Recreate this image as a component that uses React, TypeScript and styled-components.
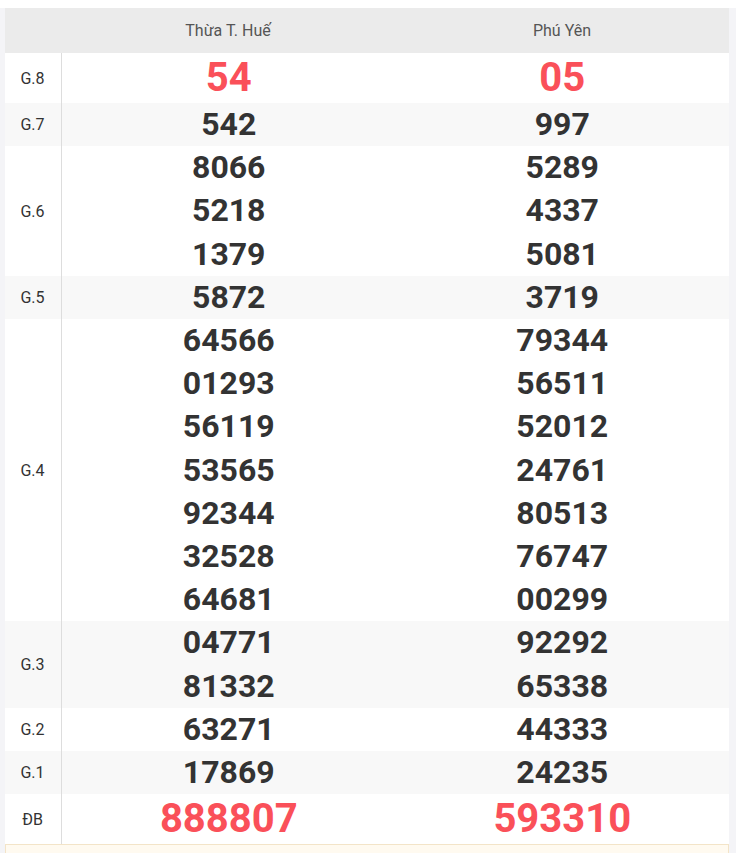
import React from "react";
import styled, { createGlobalStyle } from "styled-components";

const GlobalStyle = createGlobalStyle`
  body {
    margin: 0;
    background: #ffffff;
    font-family: Roboto, "Liberation Sans", sans-serif;
  }
`;

type Prize = {
  label: string;
  hue: [string[], string[]];
  big?: boolean;
};

const provinces = ["Thừa T. Huế", "Phú Yên"];

const prizes: Prize[] = [
  { label: "G.8", hue: [["54"], ["05"]], big: true },
  { label: "G.7", hue: [["542"], ["997"]] },
  { label: "G.6", hue: [["8066", "5218", "1379"], ["5289", "4337", "5081"]] },
  { label: "G.5", hue: [["5872"], ["3719"]] },
  {
    label: "G.4",
    hue: [
      ["64566", "01293", "56119", "53565", "92344", "32528", "64681"],
      ["79344", "56511", "52012", "24761", "80513", "76747", "00299"],
    ],
  },
  { label: "G.3", hue: [["04771", "81332"], ["92292", "65338"]] },
  { label: "G.2", hue: [["63271"], ["44333"]] },
  { label: "G.1", hue: [["17869"], ["24235"]] },
  { label: "ĐB", hue: [["888807"], ["593310"]], big: true },
];

const App = () => {
  return (
    <Page>
      <GlobalStyle />
      <Frame>
        <Table>
          <HeadRow>
            <HeadCell />
            {provinces.map((p) => (
              <HeadCell key={p}>{p}</HeadCell>
            ))}
          </HeadRow>
          {prizes.map((prize, i) => (
            <Row key={prize.label} $alt={i % 2 === 1}>
              <Label>{prize.label}</Label>
              {prize.hue.map((nums, c) => (
                <Numbers key={c}>
                  {nums.map((n) => (
                    <Num key={n} $big={prize.big}>
                      {n}
                    </Num>
                  ))}
                </Numbers>
              ))}
            </Row>
          ))}
          <Footer />
        </Table>
      </Frame>
    </Page>
  );
};

const Page = styled.div`
  padding-top: 8px;
  background: #ffffff;
`;

const Frame = styled.div`
  background: #f4f4f7;
  padding: 0 7px 0 5px;
  min-height: 845px;
`;

const Table = styled.div`
  display: flex;
  flex-direction: column;
`;

const HeadRow = styled.div`
  display: grid;
  grid-template-columns: 56px 1fr 1fr;
  height: 45px;
  background: #ebebeb;
`;

const HeadCell = styled.div`
  display: flex;
  align-items: center;
  justify-content: center;
  font-size: 16px;
  color: #555;
`;

const Row = styled.div<{ $alt: boolean }>`
  display: grid;
  grid-template-columns: 57px 1fr 1fr;
  background: ${(p) => (p.$alt ? "#f8f8f8" : "#ffffff")};
`;

const Label = styled.div`
  display: flex;
  align-items: center;
  justify-content: center;
  border-right: 1px solid #dddddd;
  font-size: 16px;
  color: #333;
  padding-right: 1px;
`;

const Numbers = styled.div`
  display: flex;
  flex-direction: column;
  align-items: center;
`;

const Num = styled.div<{ $big?: boolean }>`
  font-weight: 700;
  font-size: ${(p) => (p.$big ? "40px" : "32px")};
  line-height: ${(p) => (p.$big ? "50px" : "43.2px")};
  color: ${(p) => (p.$big ? "#fa5059" : "#333333")};
`;

const Footer = styled.div`
  height: 20px;
  background: #fffaf0;
  border: 1px solid #f3e4c8;
`;

export default App;
